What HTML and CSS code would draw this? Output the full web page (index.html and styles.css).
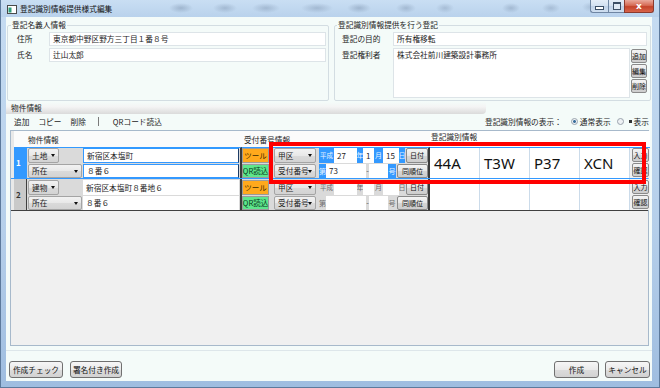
FILE: index.html
```html
<!DOCTYPE html>
<html lang="ja">
<head>
    <meta charset="UTF-8">
    <meta name="viewport" content="width=device-width, initial-scale=1.0">
    <title>登記識別情報提供様式編集</title>
    <link rel="stylesheet" href="styles.css">
</head>
<body>
<div class="window">
    <div class="titlebar">
        <svg class="app-icon" width="10" height="9" viewBox="0 0 10 9">
            <rect x="0.5" y="0.5" width="9" height="8" fill="#ffffff" stroke="#4a4a4a"/>
            <rect x="1.5" y="2.5" width="3" height="5" fill="#2f9e7c"/>
        </svg>
        <span class="title">登記識別情報提供様式編集</span>
        <div class="caption-buttons">
            <span class="cap-btn cap-min"><i></i></span>
            <span class="cap-btn cap-max"><i></i></span>
            <span class="cap-btn cap-close">x</span>
        </div>
    </div>

    <div class="client">
        <div class="groups">
            <fieldset class="group group-owner">
                <legend>登記名義人情報</legend>
                <div class="field-row">
                    <label>住所</label>
                    <div class="textbox">東京都中野区野方三丁目１番８号</div>
                </div>
                <div class="field-row">
                    <label>氏名</label>
                    <div class="textbox">辻山太郎</div>
                </div>
            </fieldset>
            <fieldset class="group group-reg">
                <legend>登記識別情報提供を行う登記</legend>
                <div class="field-row">
                    <label>登記の目的</label>
                    <div class="textbox">所有権移転</div>
                </div>
                <div class="field-row">
                    <label>登記権利者</label>
                    <div class="textbox textarea">株式会社前川建築設計事務所</div>
                    <div class="side-buttons">
                        <span class="mini-btn">追加</span>
                        <span class="mini-btn">編集</span>
                        <span class="mini-btn">削除</span>
                    </div>
                </div>
            </fieldset>
        </div>

        <div class="bukken">
            <div class="bukken-title"><span>物件情報</span></div>
            <div class="toolbar">
                <div class="tool-items">
                    <span>追加</span>
                    <span>コピー</span>
                    <span>削除</span>
                    <span class="tool-sep"></span>
                    <span>QRコード読込</span>
                </div>
                <div class="view-mode">
                    <span>登記識別情報の表示：</span>
                    <span class="radio checked"></span>
                    <span>通常表示</span>
                    <span class="radio"></span>
                    <span class="mark"></span>
                    <span>表示</span>
                </div>
            </div>

            <div class="grid">
                <div class="grid-row grid-head">
                    <div class="rowhdr"></div>
                    <div class="c-bukken">物件情報</div>
                    <div class="c-uke">受付番号情報</div>
                    <div class="c-id">登記識別情報</div>
                </div>

                <div class="grid-row selected">
                    <div class="rowhdr">1</div>
                    <div class="c-bukken">
                        <div class="line">
                            <span class="combo w31">土地</span>
                            <span class="fill"></span>
                            <span class="cell-input w156">新宿区本塩町</span>
                        </div>
                        <div class="line">
                            <span class="combo w54">所在</span>
                            <span class="fill"></span>
                            <span class="cell-input w156">８番６</span>
                        </div>
                    </div>
                    <div class="c-uke">
                        <div class="line">
                            <span class="btn-tool">ツール</span>
                            <span class="combo w42 ml5">甲区</span>
                            <span class="tag w15 ml3">平成</span>
                            <span class="num w23">27</span>
                            <span class="tag w6">年</span>
                            <span class="num w11">1</span>
                            <span class="tag w9">月</span>
                            <span class="num w16">15</span>
                            <span class="tag w6">日</span>
                            <span class="mini-btn w22 ml1">日付</span>
                        </div>
                        <div class="line">
                            <span class="btn-qr">QR読込</span>
                            <span class="combo w42 ml5">受付番号</span>
                            <span class="tag w7 ml3">第</span>
                            <span class="num w40">73</span>
                            <span class="dash w3">-</span>
                            <span class="num w19"></span>
                            <span class="tag w8">号</span>
                            <span class="mini-btn w31 ml1">同順位</span>
                        </div>
                    </div>
                    <div class="c-id">
                        <span class="code">44A</span>
                        <span class="code">T3W</span>
                        <span class="code">P37</span>
                        <span class="code">XCN</span>
                        <div class="id-buttons">
                            <span class="mini-btn">入力</span>
                            <span class="mini-btn">確認</span>
                        </div>
                    </div>
                </div>

                <div class="grid-row">
                    <div class="rowhdr">2</div>
                    <div class="c-bukken">
                        <div class="line">
                            <span class="combo w31">建物</span>
                            <span class="fill"></span>
                            <span class="cell-input w156">新宿区本塩町８番地６</span>
                        </div>
                        <div class="line">
                            <span class="combo w54">所在</span>
                            <span class="fill"></span>
                            <span class="cell-input w156">８番６</span>
                        </div>
                    </div>
                    <div class="c-uke">
                        <div class="line">
                            <span class="btn-tool">ツール</span>
                            <span class="combo w42 ml5">甲区</span>
                            <span class="tag off w15 ml3">平成</span>
                            <span class="num w23"></span>
                            <span class="tag off w6">年</span>
                            <span class="num w11"></span>
                            <span class="tag off w9">月</span>
                            <span class="num w16"></span>
                            <span class="tag off w6">日</span>
                            <span class="mini-btn w22 ml1">日付</span>
                        </div>
                        <div class="line">
                            <span class="btn-qr">QR読込</span>
                            <span class="combo w42 ml5">受付番号</span>
                            <span class="tag off w7 ml3">第</span>
                            <span class="num w40"></span>
                            <span class="dash w3">-</span>
                            <span class="num w19"></span>
                            <span class="tag off w8">号</span>
                            <span class="mini-btn w31 ml1">同順位</span>
                        </div>
                    </div>
                    <div class="c-id">
                        <span class="code"></span>
                        <span class="code"></span>
                        <span class="code"></span>
                        <span class="code"></span>
                        <div class="id-buttons">
                            <span class="mini-btn">入力</span>
                            <span class="mini-btn">確認</span>
                        </div>
                    </div>
                </div>

                <div class="highlight"></div>
            </div>
        </div>

        <div class="footer">
            <span class="button w54">作成チェック</span>
            <span class="button w52 ml7">署名付き作成</span>
            <span class="spacer"></span>
            <span class="button w45">作成</span>
            <span class="button w45 ml6">キャンセル</span>
        </div>
    </div>
</div>
</body>
</html>
```

FILE: styles.css
```css
* {
    box-sizing: border-box;
}

html, body {
    margin: 0;
    padding: 0;
}

body {
    width: 660px;
    height: 388px;
    overflow: hidden;
    font-family: "Noto Sans CJK JP", "Noto Sans", sans-serif;
    font-size: 7.7px;
    line-height: 1;
    color: #1c1c1c;
    background: #a9c6e6;
}

/* ventana */
.window {
    width: 660px;
    height: 388px;
    display: flex;
    flex-direction: column;
    padding: 0 7px 6px 5px;
    background: linear-gradient(to bottom, #c6dcf2 0%, #b5cfea 60%, #9fbde0 100%);
    border: 1px solid #5d7a9c;
    border-top: none;
}

.titlebar {
    height: 17px;
    display: flex;
    align-items: flex-start;
    flex-shrink: 0;
    margin: 0 -7px 0 -5px;
    padding: 0 7px 0 5px;
    /* manchas borrosas del cristal */
    background:
        radial-gradient(ellipse 12px 5px at 180px 8px, rgba(70, 90, 120, 0.28), transparent),
        radial-gradient(ellipse 12px 5px at 224px 8px, rgba(70, 90, 120, 0.25), transparent),
        radial-gradient(ellipse 14px 5px at 265px 8px, rgba(70, 90, 120, 0.25), transparent),
        radial-gradient(ellipse 16px 5px at 316px 8px, rgba(70, 90, 120, 0.25), transparent),
        radial-gradient(ellipse 12px 5px at 358px 8px, rgba(70, 90, 120, 0.28), transparent),
        radial-gradient(ellipse 10px 5px at 405px 8px, rgba(70, 90, 120, 0.25), transparent),
        radial-gradient(ellipse 9px 5px at 444px 8px, rgba(70, 90, 120, 0.22), transparent),
        radial-gradient(ellipse 9px 5px at 510px 8px, rgba(70, 90, 120, 0.25), transparent),
        radial-gradient(ellipse 9px 5px at 550px 8px, rgba(70, 90, 120, 0.22), transparent),
        radial-gradient(ellipse 9px 5px at 590px 7px, rgba(70, 90, 120, 0.2), transparent),
        linear-gradient(to bottom, #c9def3, #b9d2ec);
}

.app-icon {
    margin: 5px 0 0 1px;
}

.title {
    margin: 5px 0 0 3px;
    color: #111;
}

.caption-buttons {
    margin-left: auto;
    margin-right: -2px;
    display: flex;
    height: 13px;
}

.cap-btn {
    display: flex;
    align-items: center;
    justify-content: center;
    height: 13px;
    border: 1px solid #6f86a3;
    border-top: none;
    background: linear-gradient(to bottom, #e4edf8 0%, #d2e0f1 50%, #bfd1e8 51%, #cfdff0 100%);
}

.cap-min {
    width: 18px;
    border-radius: 0 0 0 3px;
    border-right: none;
}

.cap-min i {
    width: 7px;
    height: 2px;
    margin-top: 4px;
    background: #fff;
    border: 1px solid #3b4e66;
    box-sizing: content-box;
}

.cap-max {
    width: 16px;
    border-right: none;
}

.cap-max i {
    width: 6px;
    height: 5px;
    border: 1px solid #3b4e66;
    border-top-width: 2px;
    box-sizing: content-box;
    background: #dfe9f5;
}

.cap-close {
    width: 30px;
    border-radius: 0 0 3px 0;
    border-color: #8b3a2e;
    background: linear-gradient(to bottom, #e9a99c 0%, #d66b55 45%, #c4432a 55%, #d8644a 100%);
    color: #fff;
    font-family: "DejaVu Sans", sans-serif;
    font-weight: bold;
    font-size: 9px;
}

.client {
    flex: 1;
    display: flex;
    flex-direction: column;
    background: #f4fbf9;
}

/* grupos de arriba */
.groups {
    display: flex;
    gap: 5px;
    padding: 3px 1px 0 1px;
}

.group {
    margin: 0;
    border: 1px solid #d3dde2;
    border-radius: 2px;
    padding: 2px 2px 2px 9px;
    display: flex;
    flex-direction: column;
    gap: 2px;
}

.group legend {
    padding: 0 1px;
    margin-left: -6px;
    line-height: 10px;
    color: #222;
}

.group-owner {
    width: 322px;
}

.group-reg {
    flex: 1;
    padding-left: 7px;
    padding-right: 3px;
}

.group-reg legend {
    margin-left: -5px;
}

.field-row {
    display: flex;
    align-items: flex-start;
}

.field-row label {
    width: 32px;
    padding-top: 2px;
    line-height: 10px;
    flex-shrink: 0;
}

.group-reg .field-row label {
    width: 51px;
}

.textbox {
    flex: 1;
    height: 14px;
    padding: 0 3px;
    line-height: 12px;
    background: #fff;
    border: 1px solid #dde4e8;
}

.textbox.textarea {
    height: 50px;
    padding-top: 1px;
    line-height: 10px;
}

.side-buttons {
    width: 16px;
    margin-left: 1px;
    display: flex;
    flex-direction: column;
    gap: 1px;
    padding-top: 1px;
}

.side-buttons .mini-btn {
    height: 14px;
}

/* botones pequeños */
.mini-btn {
    display: flex;
    align-items: center;
    justify-content: center;
    font-size: 7px;
    white-space: nowrap;
    overflow: hidden;
    border: 1px solid #8a8a8a;
    border-radius: 2px;
    background: linear-gradient(to bottom, #f4f4f4 0%, #e6e6e6 50%, #d6d6d6 51%, #cdcdcd 100%);
    color: #111;
}

/* seccion de bienes */
.bukken {
    flex: 1;
    display: flex;
    flex-direction: column;
}

.bukken-title {
    height: 12px;
    margin-top: 1px;
    padding-left: 5px;
    line-height: 12px;
    margin-right: 166px;
    border-radius: 0 0 4px 0;
    background: linear-gradient(to bottom, rgba(255,255,255,0) 0%, #f4f4f4 40%, #dadada 100%);
}

.toolbar {
    height: 15px;
    display: flex;
    align-items: center;
    justify-content: space-between;
    padding: 0 3px 0 8px;
}

.tool-items {
    display: flex;
    align-items: center;
    gap: 9px;
}

.tool-sep {
    width: 1px;
    height: 9px;
    background: #7a7a7a;
    margin: 0 5px 0 3px;
}

.view-mode {
    display: flex;
    align-items: center;
    gap: 2px;
}

.radio {
    width: 7px;
    height: 7px;
    border-radius: 50%;
    border: 1px solid #9aa3ad;
    background: #eef1f4;
    margin-left: 4px;
}

.radio.checked {
    margin-left: 7px;
    background: radial-gradient(circle, #3b6e9c 0 35%, #eef1f4 45%);
}

.mark {
    width: 3px;
    height: 3px;
    background: #333;
    margin-left: 3px;
}

/* tabla */
.grid {
    flex: 1;
    position: relative;
    margin: 1px 3px 0 4px;
    border: 1px solid #a7b9cb;
    background: #f0f0f0;
}

.grid-row {
    display: grid;
    grid-template-columns: 16px 215px 188px 220px;
    height: 32px;
    border-bottom: 1px solid #404040;
}

.grid-row > div {
    min-width: 0;
}

.grid-head {
    height: 16px;
    border-bottom: none;
    background: #fbfbfb;
    line-height: 16px;
}

.grid-head .c-bukken {
    padding-left: 4px;
}

.grid-head .c-uke {
    padding-left: 2px;
}

.grid-head .c-id {
    padding-left: 1px;
    line-height: 12px;
}

.rowhdr {
    border-left: 3px solid #e9e9e9;
    border-right: 1px solid #404040;
    background: #c9c9c9;
    display: flex;
    align-items: center;
    padding-left: 2px;
    font-size: 8px;
    font-weight: bold;
    color: #333;
}

.grid-head .rowhdr {
    background: #fbfbfb;
    border-right: none;
}

.selected {
    border-bottom: 1px solid #3399ff;
}

.selected .rowhdr {
    background: #3399ff;
    color: #fff;
    border-right-color: #3399ff;
}

.grid-row .c-bukken,
.grid-row .c-uke {
    background: #dadada;
    border-right: 2px solid #3a3a3a;
    display: flex;
    flex-direction: column;
    gap: 1px;
    padding-top: 1px;
}

.grid-row .c-bukken {
    padding-left: 1px;
    padding-right: 1px;
}

.grid-head .c-bukken,
.grid-head .c-uke {
    background: #fbfbfb;
    border-right: none;
}

.selected .c-bukken,
.selected .c-uke {
    border-top: 1px solid #3399ff;
    padding-top: 0;
}

.line {
    display: flex;
    height: 15px;
}

.line + .line {
    height: 14px;
}

.fill {
    flex: 1;
}

.combo {
    position: relative;
    height: 100%;
    padding-left: 3px;
    display: flex;
    align-items: center;
    white-space: nowrap;
    overflow: hidden;
    border: 1px solid #a4a4a4;
    border-radius: 2px;
    background: linear-gradient(to bottom, #f2f2f2 0%, #e8e8e8 50%, #dadada 51%, #d3d3d3 100%);
}

.combo::after {
    content: "";
    position: absolute;
    right: 3px;
    top: 5px;
    border-left: 2.5px solid transparent;
    border-right: 2.5px solid transparent;
    border-top: 3px solid #111;
}

.cell-input {
    height: 100%;
    padding-left: 3px;
    display: flex;
    align-items: center;
    background: #fff;
    white-space: nowrap;
}

.selected .c-bukken .cell-input {
    border: 1px solid #3399ff;
    border-right-color: #1d3c66;
}

.btn-tool,
.btn-qr {
    width: 27px;
    height: 100%;
    display: flex;
    align-items: center;
    justify-content: center;
    white-space: nowrap;
    font-size: 7.5px;
    border: 1px solid #9a9a9a;
}

.btn-tool {
    background: #ffa91c;
    color: #3a2a00;
}

.btn-qr {
    background: #5ee68c;
    color: #07371a;
}

.tag {
    height: 100%;
    display: flex;
    align-items: center;
    justify-content: center;
    white-space: nowrap;
    font-size: 7px;
    background: #3399ff;
    color: #e8f3ff;
}

.tag.w15 {
    overflow: hidden;
    font-size: 6.5px;
}

.tag.off {
    background: transparent;
    color: #6e6e6e;
}

.num {
    position: relative;
    height: 100%;
    padding-left: 3px;
    display: flex;
    align-items: center;
    background: #fff;
    font-size: 8px;
}

.dash {
    display: flex;
    align-items: center;
    justify-content: center;
    color: #555;
}

.grid-row .c-uke .mini-btn {
    height: 100%;
}

.grid-row .c-id {
    display: flex;
    background: #fff;
}

.selected .c-id {
    border-top: 1px solid #3399ff;
}

.code {
    width: 50px;
    display: flex;
    align-items: center;
    padding-left: 4px;
    border-right: 1px solid #cbdbea;
    font-family: "Noto Sans", "Open Sans", sans-serif;
    font-size: 15px;
    color: #111;
}

.id-buttons {
    flex: 1;
    display: flex;
    flex-direction: column;
    gap: 1px;
    padding: 0 1px 0 2px;
    background: #f0f0f0;
}

.id-buttons .mini-btn {
    height: 14px;
}

.grid-row:not(.selected) .id-buttons {
    padding-top: 1px;
}

.highlight {
    position: absolute;
    left: 258px;
    top: 11px;
    width: 377px;
    height: 42px;
    border: 4px solid #ff0000;
}

/* pie */
.footer {
    height: 31px;
    margin-top: 4px;
    flex-shrink: 0;
    display: flex;
    align-items: flex-end;
    padding: 0 2px 3px 3px;
    border-top: 1px solid #dde6ea;
}

.button {
    height: 17px;
    display: flex;
    align-items: center;
    justify-content: center;
    white-space: nowrap;
    border: 1px solid #707070;
    border-radius: 3px;
    background: linear-gradient(to bottom, #f6f6f6 0%, #eaeaea 50%, #dcdcdc 51%, #d2d2d2 100%);
    color: #111;
}

.spacer {
    flex: 1;
}

/* medidas */
.w3 { width: 3px; }
.w5 { width: 5px; }
.w6 { width: 6px; }
.w7 { width: 7px; }
.w8 { width: 8px; }
.w9 { width: 9px; }
.w11 { width: 11px; }
.w15 { width: 15px; }
.w16 { width: 16px; }
.w19 { width: 19px; }
.w22 { width: 22px; }
.w23 { width: 23px; }
.w31 { width: 31px; }
.w40 { width: 40px; }
.w42 { width: 42px; }
.w45 { width: 45px; }
.w52 { width: 52px; }
.w54 { width: 54px; }
.w156 { width: 156px; }
.ml1 { margin-left: 1px; }
.ml2 { margin-left: 2px; }
.ml3 { margin-left: 3px; }
.ml5 { margin-left: 5px; }
.ml6 { margin-left: 6px; }
.ml7 { margin-left: 7px; }
```
